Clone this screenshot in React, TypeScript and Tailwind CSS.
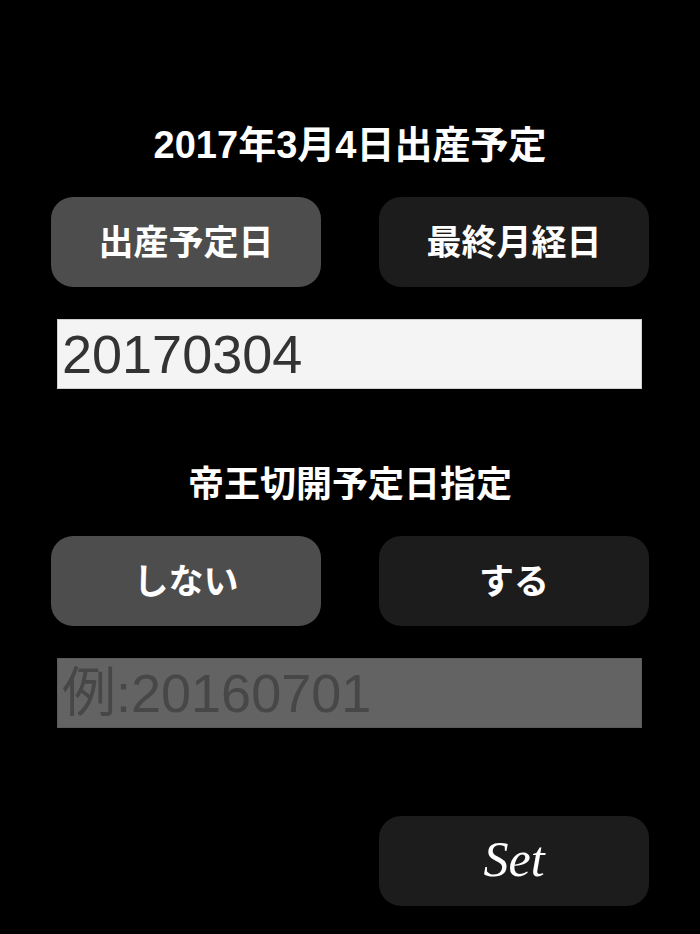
import { useState } from 'react';

const cjk = '"Noto Sans CJK JP", "Noto Sans", sans-serif';
const latinFirst = '"Liberation Sans", Arial, "Noto Sans CJK JP", sans-serif';

export default function App() {
  const [mode, setMode] = useState<'due' | 'last'>('due');
  const [cesarean, setCesarean] = useState(false);
  const [date, setDate] = useState('20170304');
  const [cDate, setCDate] = useState('');

  const toggle = (active: boolean) =>
    `h-[90px] w-[270px] rounded-[22px] pb-[4px] text-[35px] font-bold text-white flex items-center justify-center ${
      active ? 'bg-[#4d4d4d]' : 'bg-[#1c1c1c]'
    }`;

  return (
    <div className="min-h-[934px] w-[700px] bg-black px-[51px]" style={{ fontFamily: cjk }}>
      <h1
        className="pt-[126px] text-center text-[38px] leading-[39px] font-bold text-white"
        style={{ fontFamily: latinFirst }}
      >
        2017年3月4日出産予定
      </h1>

      <div className="mt-[32px] flex justify-between">
        <button className={toggle(mode === 'due')} onClick={() => setMode('due')}>
          出産予定日
        </button>
        <button className={toggle(mode === 'last')} onClick={() => setMode('last')}>
          最終月経日
        </button>
      </div>

      <input
        value={date}
        onChange={(e) => setDate(e.target.value)}
        className="mx-[6px] mt-[32px] block h-[70px] w-[585px] border border-[#cfcfcf] bg-[#f4f4f4] px-[4px] text-[54px] text-[#333] outline-none"
        style={{ fontFamily: latinFirst }}
      />

      <h2 className="mt-[74px] text-center text-[36px] leading-[36px] font-bold text-white">
        帝王切開予定日指定
      </h2>

      <div className="mt-[37px] flex justify-between">
        <button className={toggle(!cesarean)} onClick={() => setCesarean(false)}>
          しない
        </button>
        <button className={toggle(cesarean)} onClick={() => setCesarean(true)}>
          する
        </button>
      </div>

      <input
        value={cDate}
        onChange={(e) => setCDate(e.target.value)}
        disabled={!cesarean}
        placeholder="例:20160701"
        className="mx-[6px] mt-[32px] block h-[70px] w-[585px] border border-[#5a5a5a] bg-[#636363] px-[4px] text-[54px] text-[#333] placeholder:text-[#474747] outline-none"
        style={{ fontFamily: latinFirst }}
      />

      <div className="mt-[88px] flex justify-end">
        <button
          className="h-[90px] w-[270px] rounded-[22px] bg-[#1c1c1c] pb-[4px] text-[50px] italic text-white"
          style={{ fontFamily: '"Liberation Serif", "DejaVu Serif", serif' }}
        >
          Set
        </button>
      </div>
    </div>
  );
}
